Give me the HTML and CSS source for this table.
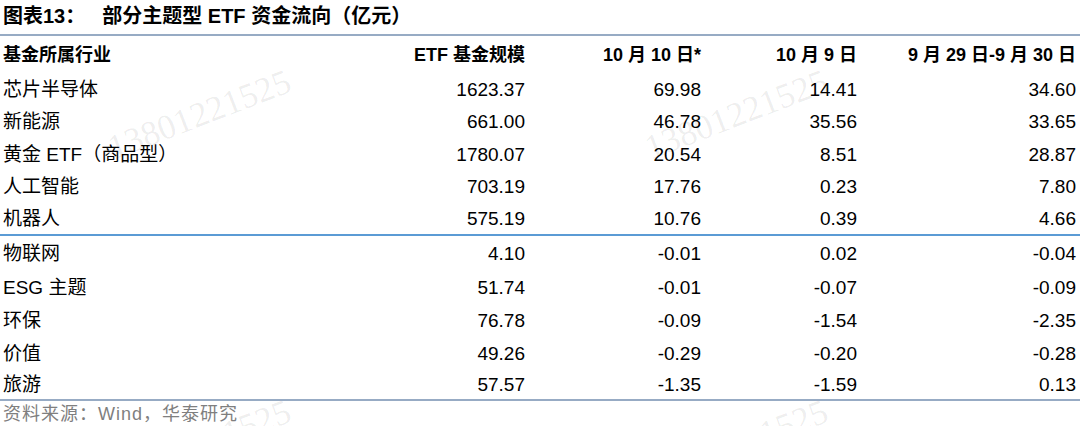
FILE: index.html
```html
<!DOCTYPE html>
<html lang="zh-CN">
<head>
<meta charset="utf-8">
<title>部分主题型 ETF 资金流向</title>
<link rel="stylesheet" href="styles.css">
</head>
<body>
<div class="page">
  <h1 class="title"><span class="fig">图表13：</span><span class="ttl">部分主题型 ETF 资金流向（亿元）</span></h1>
  <table class="grid">
    <colgroup>
      <col class="c-name"><col class="c-size"><col class="c-d1"><col class="c-d2"><col class="c-d3">
    </colgroup>
    <thead>
      <tr><th class="name">基金所属行业</th><th>ETF 基金规模</th><th>10 月 10 日*</th><th>10 月 9 日</th><th>9 月 29 日-9 月 30 日</th></tr>
    </thead>
    <tbody class="top">
      <tr><td class="name">芯片半导体</td><td>1623.37</td><td>69.98</td><td>14.41</td><td>34.60</td></tr>
      <tr><td class="name">新能源</td><td>661.00</td><td>46.78</td><td>35.56</td><td>33.65</td></tr>
      <tr><td class="name">黄金 ETF（商品型）</td><td>1780.07</td><td>20.54</td><td>8.51</td><td>28.87</td></tr>
      <tr><td class="name">人工智能</td><td>703.19</td><td>17.76</td><td>0.23</td><td>7.80</td></tr>
      <tr class="last"><td class="name">机器人</td><td>575.19</td><td>10.76</td><td>0.39</td><td>4.66</td></tr>
    </tbody>
    <tbody class="bottom">
      <tr class="first"><td class="name">物联网</td><td>4.10</td><td>-0.01</td><td>0.02</td><td>-0.04</td></tr>
      <tr><td class="name">ESG 主题</td><td>51.74</td><td>-0.01</td><td>-0.07</td><td>-0.09</td></tr>
      <tr><td class="name">环保</td><td>76.78</td><td>-0.09</td><td>-1.54</td><td>-2.35</td></tr>
      <tr><td class="name">价值</td><td>49.26</td><td>-0.29</td><td>-0.20</td><td>-0.28</td></tr>
      <tr class="end"><td class="name">旅游</td><td>57.57</td><td>-1.35</td><td>-1.59</td><td>0.13</td></tr>
    </tbody>
  </table>
  <p class="source">资料来源：Wind，华泰研究</p>
  <span class="wm wm1" aria-hidden="true">13801221525</span>
  <span class="wm wm2" aria-hidden="true">13801221525</span>
  <span class="wm wm3" aria-hidden="true">13801221525</span>
  <span class="wm wm4" aria-hidden="true">13801221525</span>
</div>
</body>
</html>
```

FILE: styles.css
```css
html, body {
  margin: 0;
  padding: 0;
  background: #ffffff;
}
body {
  font-family: "Liberation Sans", "Noto Sans CJK SC", sans-serif;
  color: #000;
}
.page {
  position: relative;
  width: 1080px;
  height: 426px;
  overflow: hidden;
}
.title {
  margin: 0;
  padding-left: 3px;
  padding-bottom: 2px;
  box-sizing: border-box;
  border-bottom: 2px solid #97abc4;
  height: 36px;
  display: flex;
  align-items: center;
  font-size: 20px;
  font-weight: bold;
  line-height: 1;
}
.fig {
  margin-right: 17px;
}
.grid {
  width: 1080px;
  border-collapse: collapse;
  table-layout: fixed;
  font-size: 19px;
}
.c-name { width: 300px; }
.c-size { width: 225px; }
.c-d1 { width: 176px; }
.c-d2 { width: 156px; }
.c-d3 { width: 223px; }
th, td {
  padding: 0;
  text-align: right;
  white-space: nowrap;
  line-height: 1;
}
th {
  height: 37px;
  font-weight: bold;
  font-size: 18px;
}
td {
  height: 32.5px;
}
th:last-child, td:last-child {
  padding-right: 4px;
}
.name {
  text-align: left;
  padding-left: 3px;
}
tbody.top tr.last td {
  border-bottom: 2px solid #5b9bd5;
  height: 31px;
}
tbody.bottom tr td {
  height: 33px;
}
tbody.bottom tr.first td {
  height: 35px;
}
tbody.bottom tr.end td {
  border-bottom: 2px solid #97abc4;
  height: 29px;
}
.source {
  margin: 0;
  padding: 3px 0 0 3px;
  font-size: 18px;
  line-height: 20px;
  letter-spacing: 1px;
  color: #7f7f7f;
}
.wm {
  position: absolute;
  font-family: "Liberation Serif", serif;
  font-size: 35px;
  line-height: 1;
  color: rgba(0, 0, 0, 0.07);
  transform: rotate(-21deg);
  transform-origin: center;
  white-space: nowrap;
  pointer-events: none;
}
.wm1 { left: 103px; top: 97px; }
.wm2 { left: 640px; top: 97px; }
.wm3 { left: 103px; top: 427px; }
.wm4 { left: 640px; top: 427px; }
```
